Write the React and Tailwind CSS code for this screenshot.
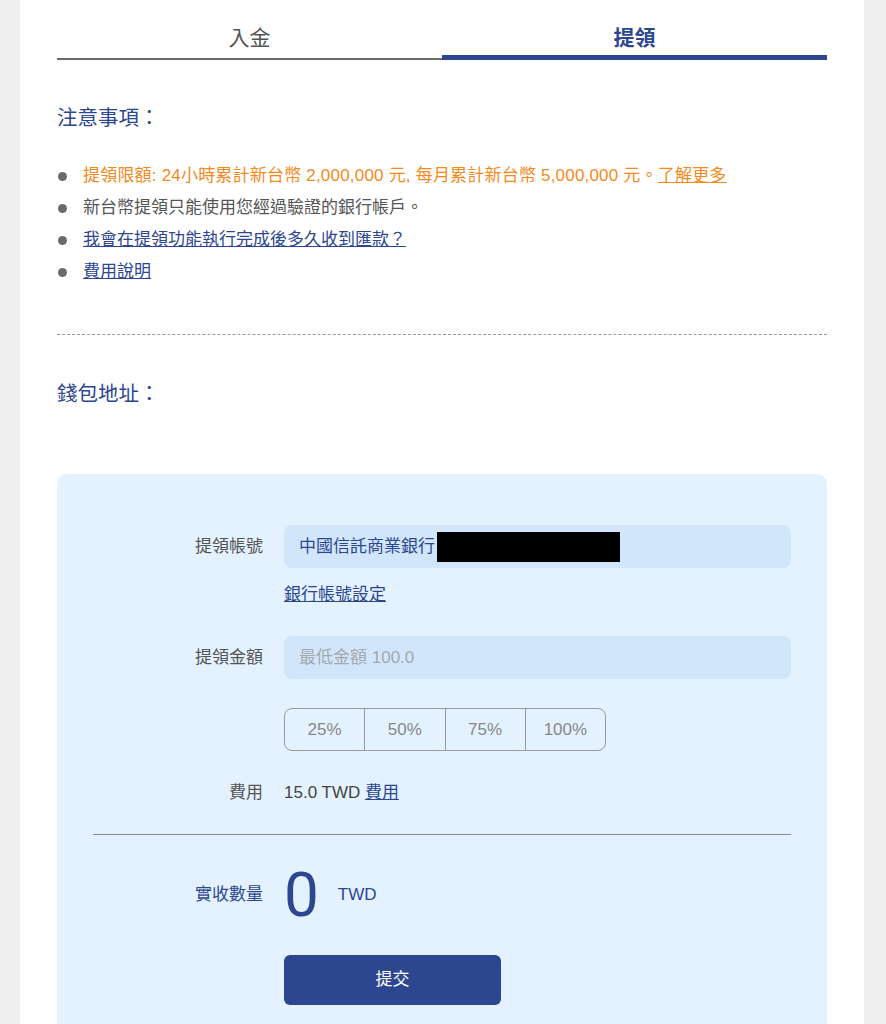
export default function App() {
  const font = { fontFamily: '"Liberation Sans", "Noto Sans CJK TC", sans-serif' };

  return (
    <div className="min-h-screen bg-[#efefef] pl-[20px] pr-[22px]" style={font}>
      <div className="bg-white px-[37px] pb-10">
        {/* Tabs */}
        <div className="grid grid-cols-2">
          <div className="h-[60px] pt-[24px] border-b-2 border-[#6b6b6b] text-center text-[21px] leading-[28px] text-[#555]">
            入金
          </div>
          <div className="h-[60px] pt-[24px] border-b-[5px] border-[#2c4790] text-center text-[21px] leading-[28px] font-bold text-[#2c4790]">
            提領
          </div>
        </div>

        {/* 注意事項 */}
        <h3 className="mt-[44px] text-[20.5px] leading-[28px] text-[#2c4790]">注意事項：</h3>
        <ul className="mt-[28px] text-[17px] leading-[32px]">
          <li className="flex items-center">
            <span className="w-[9px] h-[9px] rounded-full bg-[#6a6a6a] ml-[1px] mr-[16px]" />
            <span className="text-[#f38a1e] tracking-[0.2px]">
              提領限額: 24小時累計新台幣 2,000,000 元, 每月累計新台幣 5,000,000 元。
              <a className="underline">了解更多</a>
            </span>
          </li>
          <li className="flex items-center">
            <span className="w-[9px] h-[9px] rounded-full bg-[#6a6a6a] ml-[1px] mr-[16px]" />
            <span className="text-[#555]">新台幣提領只能使用您經過驗證的銀行帳戶。</span>
          </li>
          <li className="flex items-center">
            <span className="w-[9px] h-[9px] rounded-full bg-[#6a6a6a] ml-[1px] mr-[16px]" />
            <a className="text-[#2c4790] underline">我會在提領功能執行完成後多久收到匯款？</a>
          </li>
          <li className="flex items-center">
            <span className="w-[9px] h-[9px] rounded-full bg-[#6a6a6a] ml-[1px] mr-[16px]" />
            <a className="text-[#2c4790] underline">費用說明</a>
          </li>
        </ul>

        <div className="mt-[46px] border-t border-dashed border-[#999]" />

        <h3 className="mt-[45px] text-[20.5px] leading-[28px] text-[#2c4790]">錢包地址：</h3>

        {/* Form box */}
        <div className="mt-[66px] rounded-[10px] bg-[#e3f2fe] px-[36px] pt-[51px] pb-[40px] text-[17px]">
          <div className="grid grid-cols-[170px_1fr] gap-x-[21px]">
            <div className="h-[43px] flex items-center justify-end text-[#555]">提領帳號</div>
            <div className="h-[43px] rounded-[8px] bg-[#d2e6fb] pl-[15px] flex items-center text-[#2c4790]">
              中國信託商業銀行
              <span className="w-[183px] h-[30px] bg-black ml-[2px]" />
            </div>

            <div />
            <a className="mt-[15px] leading-[24px] text-[#2c4790] underline w-fit">銀行帳號設定</a>

            <div className="mt-[29px] h-[43px] flex items-center justify-end text-[#555]">提領金額</div>
            <div className="mt-[29px] h-[43px] rounded-[8px] bg-[#d2e6fb] pl-[15px] flex items-center text-[#a4a9af]">
              最低金額 100.0
            </div>

            <div />
            <div className="mt-[29px] flex w-[322px] h-[43px] rounded-[8px] border border-[#999] overflow-hidden">
              {['25%', '50%', '75%', '100%'].map((p, i) => (
                <button
                  key={p}
                  className={`flex-1 text-[#888] ${i > 0 ? 'border-l border-[#999]' : ''}`}
                >
                  {p}
                </button>
              ))}
            </div>

            <div className="mt-[30px] leading-[24px] text-right text-[#555]">費用</div>
            <div className="mt-[30px] leading-[24px] text-[#444]">
              15.0 TWD <a className="text-[#2c4790] underline">費用</a>
            </div>
          </div>

          <div className="mt-[29px] border-t-[1.5px] border-[#888]" />

          <div className="grid grid-cols-[170px_1fr] gap-x-[21px]">
            <div className="mt-[32px] h-[56px] flex items-center justify-end text-[#2c4790]">實收數量</div>
            <div className="mt-[32px] h-[56px] flex items-center text-[#2c4790]">
              <span className="text-[62px] leading-[56px] font-normal" style={{ fontFamily: 'Roboto, sans-serif' }}>0</span>
              <span className="ml-[19px]">TWD</span>
            </div>

            <div />
            <button className="mt-[32px] w-[217px] h-[50px] rounded-[6px] bg-[#2c4790] text-white">提交</button>
          </div>
        </div>
      </div>
    </div>
  );
}
